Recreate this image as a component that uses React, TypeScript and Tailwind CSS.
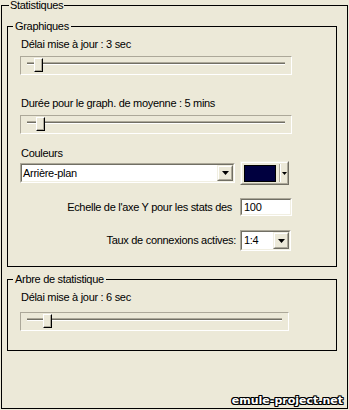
import React from "react";

function Slider({ width, thumb }: { width: number; thumb: number }) {
  return (
    <div
      className="relative h-[19px] border border-t-[#aca899] border-l-[#aca899] border-r-white border-b-white"
      style={{ width }}
    >
      <div className="mx-[6px] mt-[5px] h-[3px] border-t border-b border-t-[#aca899] border-b-white bg-[#716f64]" />
      <div
        className="absolute top-[1px] w-[9px] h-[14px] bg-[#ece9d8] border border-t-white border-l-white border-r-black border-b-black shadow-[inset_-1px_-1px_0_#aca899]"
        style={{ left: thumb }}
      />
    </div>
  );
}

function Arrow() {
  return (
    <svg width="7" height="4" viewBox="0 0 7 4" className="block">
      <path d="M0 0h7L3.5 4z" fill="#000" />
    </svg>
  );
}

function DropBtn() {
  return (
    <div className="w-[16px] h-full border border-t-[#f1efe2] border-l-[#f1efe2] border-r-[#716f64] border-b-[#716f64]">
      <div className="h-full border border-t-white border-l-white border-r-[#aca899] border-b-[#aca899] bg-[#ece9d8] flex items-center justify-center">
        <Arrow />
      </div>
    </div>
  );
}

function Sunken({ className, children }: { className: string; children: React.ReactNode }) {
  return (
    <div className={"border border-t-[#aca899] border-l-[#aca899] border-r-white border-b-white " + className}>
      <div className="h-full border border-t-[#716f64] border-l-[#716f64] border-r-[#f1efe2] border-b-[#f1efe2] bg-white flex items-stretch">
        {children}
      </div>
    </div>
  );
}

export default function App() {
  return (
    <div className="relative w-[349px] h-[410px] overflow-hidden bg-[#ece9d8] text-black text-[11px] leading-[13px] tracking-[-0.3px] font-['Liberation_Sans',Arial,sans-serif] pt-[5px]">
      <div className="ml-[1px] w-[347px] h-[404px] border border-black">
        <div className="-mt-[7px] ml-[7px] px-[1px] w-fit bg-[#ece9d8]">Statistiques</div>

        <div className="ml-[5px] mt-[14px] w-[330px] border border-black">
          <div className="-mt-[7px] ml-[5px] px-[2px] w-fit bg-[#ece9d8]">Graphiques</div>
          <div className="pl-[12px] pb-[15px]">
            <div className="mt-[5px] pl-[1px]">Délai mise à jour : 3 sec</div>
            <div className="mt-[5px]">
              <Slider width={272} thumb={13} />
            </div>
            <div className="mt-[22px] pl-[1px]">Durée pour le graph. de moyenne : 5 mins</div>
            <div className="mt-[5px]">
              <Slider width={272} thumb={15} />
            </div>
            <div className="mt-[13px] pl-[1px]">Couleurs</div>
            <div className="mt-[1px] flex items-center">
              <Sunken className="w-[215px] h-[20px]">
                <div className="flex-1 pl-[1px] flex items-center">Arrière-plan</div>
                <DropBtn />
              </Sunken>
              <div className="ml-[5px] w-[49px] h-[24px] border border-t-[#f1efe2] border-l-[#f1efe2] border-r-[#716f64] border-b-[#716f64]">
                <div className="h-full border border-t-white border-l-white border-r-[#aca899] border-b-[#aca899] flex items-center">
                  <div className="ml-[2px] w-[33px] h-[17px] bg-[#00003f] border border-black" />
                  <div className="ml-[3px] w-[2px] h-[18px] border-l border-l-[#aca899] border-r border-r-white" />
                  <div className="ml-[1px]">
                    <svg width="5" height="3" viewBox="0 0 5 3" className="block">
                      <path d="M0 0h5L2.5 3z" fill="#000" />
                    </svg>
                  </div>
                </div>
              </div>
            </div>
            <div className="mt-[13px] flex items-center">
              <div className="w-[212px] text-right">Echelle de l'axe Y pour les stats des</div>
              <Sunken className="ml-[8px] w-[52px] h-[18px]">
                <div className="pl-[2px] flex items-center">100</div>
              </Sunken>
            </div>
            <div className="mt-[14px] flex items-center">
              <div className="w-[216px] text-right">Taux de connexions actives:</div>
              <Sunken className="ml-[4px] w-[51px] h-[21px]">
                <div className="flex-1 pl-[2px] flex items-center">1:4</div>
                <DropBtn />
              </Sunken>
            </div>
          </div>
        </div>

        <div className="ml-[5px] mt-[12px] w-[330px] border border-black">
          <div className="-mt-[7px] ml-[5px] px-[2px] w-fit bg-[#ece9d8]">Arbre de statistique</div>
          <div className="pl-[12px] pb-[19px]">
            <div className="mt-[5px] pl-[1px]">Délai mise à jour : 6 sec</div>
            <div className="mt-[8px]">
              <Slider width={269} thumb={22} />
            </div>
          </div>
        </div>
      </div>

      <div className="absolute right-[6px] bottom-[2px] text-white font-bold text-[11px] tracking-normal leading-[14px] font-['DejaVu_Sans',sans-serif] [text-shadow:1px_1px_0_#000,-1px_-1px_0_#000,1px_-1px_0_#000,-1px_1px_0_#000,1px_0_0_#000,-1px_0_0_#000,0_1px_0_#000,0_-1px_0_#000]">
        emule-project.net
      </div>
    </div>
  );
}
